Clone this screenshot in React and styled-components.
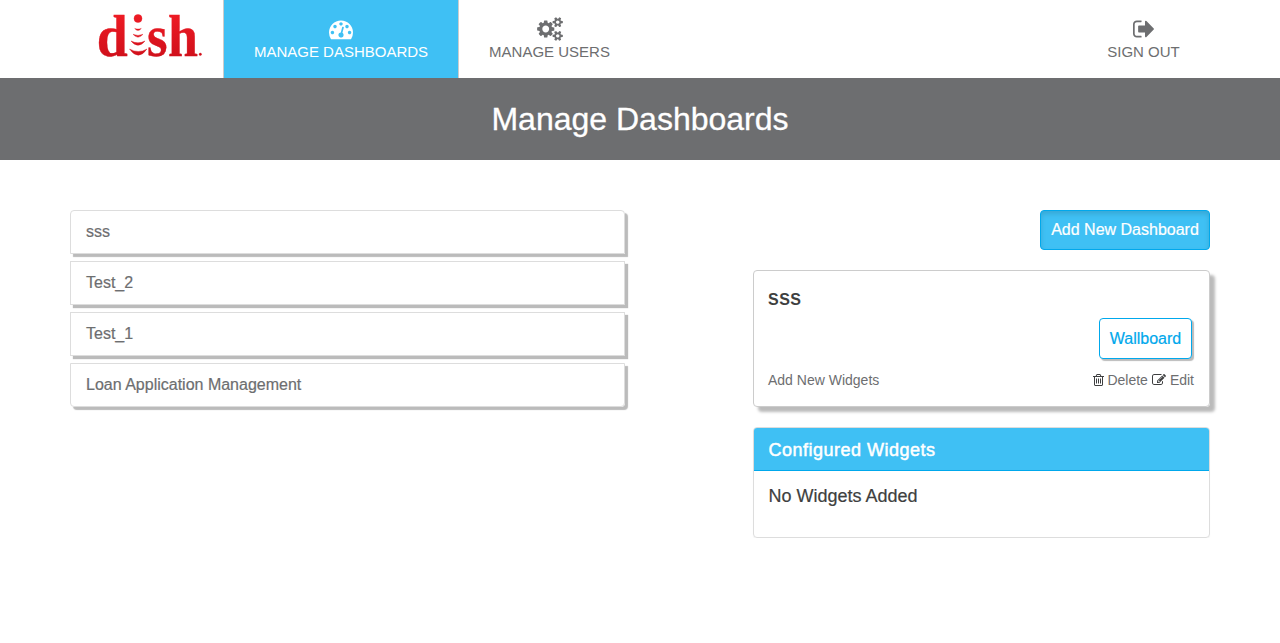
import React from "react";
import styled, { createGlobalStyle, css } from "styled-components";

const GlobalStyle = createGlobalStyle`
  *, *::before, *::after { box-sizing: border-box; }
  body {
    margin: 0;
    background: #fff;
    color: #3e3f40;
    font-family: "Liberation Sans", Arial, Helvetica, sans-serif;
    font-size: 14px;
    line-height: 20px;
  }
`;

const icons = {
  dashboard:
    "M384 1152q0-53-37.5-90.5t-90.5-37.5-90.5 37.5-37.5 90.5 37.5 90.5 90.5 37.5 90.5-37.5 37.5-90.5zm192-448q0-53-37.5-90.5t-90.5-37.5-90.5 37.5-37.5 90.5 37.5 90.5 90.5 37.5 90.5-37.5 37.5-90.5zm428 481l101-382q6-26-7.5-48.5t-38.5-29.5-48 6.5-30 39.5l-101 382q-60 5-107 43.5t-63 98.5q-20 77 20 146t117 89 146-20 89-117q16-60-6-117t-72-91zm660-33q0-53-37.5-90.5t-90.5-37.5-90.5 37.5-37.5 90.5 37.5 90.5 90.5 37.5 90.5-37.5 37.5-90.5zm-640-640q0-53-37.5-90.5t-90.5-37.5-90.5 37.5-37.5 90.5 37.5 90.5 90.5 37.5 90.5-37.5 37.5-90.5zm448 192q0-53-37.5-90.5t-90.5-37.5-90.5 37.5-37.5 90.5 37.5 90.5 90.5 37.5 90.5-37.5 37.5-90.5zm320 448q0 261-141 483-19 29-54 29h-1402q-35 0-54-29-141-221-141-483 0-182 71-348t191-286 286-191 348-71 348 71 286 191 191 286 71 348z",
  cogs:
    "M832 896q0-106-75-181t-181-75-181 75-75 181 75 181 181 75 181-75 75-181zm768 512q0-52-38-90t-90-38-90 38-38 90q0 53 37.5 90.5t90.5 37.5 90.5-37.5 37.5-90.5zm0-1024q0-52-38-90t-90-38-90 38-38 90q0 53 37.5 90.5t90.5 37.5 90.5-37.5 37.5-90.5zm-384 421v185q0 10-7 19.5t-16 10.5l-155 24q-11 35-32 76 34 48 90 115 7 11 7 20 0 12-7 19-23 30-82.5 89.5t-78.5 59.5q-11 0-21-7l-115-90q-37 19-77 31-11 108-23 155-7 24-30 24h-186q-11 0-20-7.5t-10-17.5l-23-153q-34-10-75-31l-118 89q-7 7-20 7-11 0-21-8-144-133-144-160 0-9 7-19 10-14 41-53t47-61q-23-44-35-82l-152-24q-10-1-17-9.5t-7-19.5v-185q0-10 7-19.5t16-10.5l155-24q11-35 32-76-34-48-90-115-7-11-7-20 0-12 7-20 22-30 82-89t79-59q11 0 21 7l115 90q34-18 77-32 11-108 23-154 7-24 30-24h186q11 0 20 7.5t10 17.5l23 153q34 10 75 31l118-89q8-7 20-7 11 0 21 8 144 133 144 160 0 8-7 19-12 16-42 54t-45 60q23 48 34 82l152 23q10 2 17 10.5t7 19.5zm640 533v140q0 16-149 31-12 27-30 52 51 113 51 138 0 4-4 7-122 71-124 71-8 0-46-47t-52-68q-20 2-30 2t-30-2q-14 21-52 68t-46 47q-2 0-124-71-4-3-4-7 0-25 51-138-18-25-30-52-149-15-149-31v-140q0-16 149-31 13-29 30-52-51-113-51-138 0-4 4-7 4-2 35-20t59-34 30-16q8 0 46 46.5t52 67.5q20-2 30-2t30 2q51-71 92-112l6-2q4 0 124 70 4 3 4 7 0 25-51 138 17 23 30 52 149 15 149 31zm0-1024v140q0 16-149 31-12 27-30 52 51 113 51 138 0 4-4 7-122 71-124 71-8 0-46-47t-52-68q-20 2-30 2t-30-2q-14 21-52 68t-46 47q-2 0-124-71-4-3-4-7 0-25 51-138-18-25-30-52-149-15-149-31v-140q0-16 149-31 13-29 30-52-51-113-51-138 0-4 4-7 4-2 35-20t59-34 30-16q8 0 46 46.5t52 67.5q20-2 30-2t30 2q51-71 92-112l6-2q4 0 124 70 4 3 4 7 0 25-51 138 17 23 30 52 149 15 149 31z",
  signOut:
    "M704 1440q0 4 1 20t.5 26.5-3 23.5-10 19.5-20.5 6.5h-320q-119 0-203.5-84.5t-84.5-203.5v-704q0-119 84.5-203.5t203.5-84.5h320q13 0 22.5 9.5t9.5 22.5q0 4 1 20t.5 26.5-3 23.5-10 19.5-20.5 6.5h-320q-66 0-113 47t-47 113v704q0 66 47 113t113 47h312l11.5 1 11.5 3 8 5.5 7 9 2 13.5zm928-544q0 26-19 45l-544 544q-19 19-45 19t-45-19-19-45v-288h-448q-26 0-45-19t-19-45v-384q0-26 19-45t45-19h448v-288q0-26 19-45t45-19 45 19l544 544q19 19 19 45z",
  trash:
    "M704 736v576q0 14-9 23t-23 9h-64q-14 0-23-9t-9-23v-576q0-14 9-23t23-9h64q14 0 23 9t9 23zm256 0v576q0 14-9 23t-23 9h-64q-14 0-23-9t-9-23v-576q0-14 9-23t23-9h64q14 0 23 9t9 23zm256 0v576q0 14-9 23t-23 9h-64q-14 0-23-9t-9-23v-576q0-14 9-23t23-9h64q14 0 23 9t9 23zm128 724v-948h-896v948q0 22 7 40.5t14.5 27 10.5 8.5h832q3 0 10.5-8.5t14.5-27 7-40.5zm-672-1076h448l-48-117q-7-9-17-11h-317q-10 2-17 11zm928 32v64q0 14-9 23t-23 9h-96v948q0 83-47 143.5t-113 60.5h-832q-66 0-113-58.5t-47-141.5v-952h-96q-14 0-23-9t-9-23v-64q0-14 9-23t23-9h309l70-167q15-37 54-63t79-26h320q40 0 79 26t54 63l70 167h309q14 0 23 9t9 23z",
  edit:
    "M888 1184l116-116-152-152-116 116v56h96v96h56zm440-720q-16-16-33 1l-350 350q-17 17-1 33t33-1l350-350q17-17 1-33zm80 594v190q0 119-84.5 203.5t-203.5 84.5h-832q-119 0-203.5-84.5t-84.5-203.5v-832q0-119 84.5-203.5t203.5-84.5h832q63 0 117 25 15 7 18 23 3 17-9 29l-49 49q-14 14-32 8-23-6-45-6h-832q-66 0-113 47t-47 113v832q0 66 47 113t113 47h832q66 0 113-47t47-113v-126q0-13 9-22l64-64q15-15 35-7t20 29zm-96-738l288 288-672 672h-288v-288zm444 132l-92 92-288-288 92-92q28-28 68-28t68 28l152 152q28 28 28 68t-28 68z",
};

const IconSvg = styled.svg`
  display: block;
  flex: none;
  overflow: visible;
  width: ${(p) => p.$size}px;
  height: ${(p) => p.$size}px;
  fill: currentColor;
`;

const Icon = ({ name, size, viewBox = "0 0 1792 1792" }) => (
  <IconSvg $size={size} viewBox={viewBox} aria-hidden="true">
    <path d={icons[name]} />
  </IconSvg>
);

const Header = styled.header`
  display: flex;
  height: 78px;
  padding: 0 70px;
`;

const Brand = styled.a`
  width: 153px;
  padding-left: 26px;
`;

const LogoSvg = styled.svg`
  display: block;
  width: 108px;
  height: 76px;
  font-family: "Liberation Serif", "Times New Roman", serif;
  font-weight: 700;
`;

const NavItem = styled.a`
  display: flex;
  flex-direction: column;
  align-items: center;
  width: ${(p) => p.$width}px;
  padding-top: 16.5px;
  color: #6d6e70;
  font-size: 15px;
  line-height: 22px;
  white-space: nowrap;
  ${(p) =>
    p.$active &&
    css`
      background: #3fc0f4;
      color: #fff;
      border: solid #ccc;
      border-width: 0 1px;
    `}
  ${(p) => p.$end && css`margin-left: auto;`}
`;

const TitleBar = styled.div`
  height: 82px;
  background: #6d6e70;
  color: #fff;
  text-align: center;
`;

const Title = styled.h1`
  margin: 0;
  font-size: 32px;
  line-height: 82px;
  font-weight: 400;
  -webkit-text-stroke: 0.3px currentColor;
`;

const Content = styled.main`
  display: flex;
  justify-content: space-between;
  align-items: flex-start;
  padding: 50px 70px 0;
`;

const List = styled.ul`
  display: flex;
  flex-direction: column;
  gap: 7px;
  width: 555px;
  margin: 0;
  padding: 0;
  list-style: none;
`;

const ListItem = styled.li`
  height: 44px;
  padding: 0 15px;
  border: 1px solid #ddd;
  box-shadow: 3px 3px 1px #bbb;
  color: #6d6e70;
  font-size: 16px;
  line-height: 42px;
  -webkit-text-stroke: 0.2px currentColor;
  &:first-child { border-radius: 4px 4px 0 0; }
  &:last-child { border-radius: 0 0 4px 4px; }
`;

const Side = styled.section`
  display: flex;
  flex-direction: column;
  width: 457px;
`;

const Button = styled.button`
  align-self: flex-end;
  padding: 0;
  border: 1px solid #00a8ec;
  border-radius: 4px;
  font-family: inherit;
  font-size: 16px;
  -webkit-text-stroke: 0.2px currentColor;
  ${(p) =>
    p.$primary
      ? css`
          width: 170px;
          height: 40px;
          background: #3fc0f4;
          color: #fff;
          box-shadow: inset 0 3px 5px rgba(0, 0, 0, 0.125);
        `
      : css`
          width: 93px;
          height: 41px;
          margin: 7px 2px 0 0;
          background: #fff;
          color: #00a8ec;
          box-shadow: 2px 2px 1px #bbb;
        `}
`;

const Card = styled.article`
  display: flex;
  flex-direction: column;
  height: 137px;
  margin-top: 20px;
  padding: 18px 15px 0 14px;
  border: 1px solid #ccc;
  border-radius: 4px;
  box-shadow: 5px 5px 3px #bbb;
`;

const CardTitle = styled.h2`
  margin: 0;
  font-size: 16px;
  line-height: 22px;
  letter-spacing: 0.5px;
  text-transform: uppercase;
`;

const CardFooter = styled.footer`
  display: flex;
  justify-content: space-between;
  margin-top: 11px;
  color: #6d6e70;
`;

const Actions = styled.div`
  display: flex;
  align-items: center;
  gap: 4px;
`;

const Action = styled.a`
  display: flex;
  align-items: center;
  gap: ${(p) => p.$gap}px;
  ${IconSvg} { color: #3e3f40; }
`;

const Panel = styled.article`
  height: 111px;
  margin-top: 20px;
  border: 1px solid #ddd;
  border-radius: 4px;
  box-shadow: 0 1px 1px rgba(0, 0, 0, 0.05);
  overflow: hidden;
`;

const PanelHeading = styled.h3`
  height: 43px;
  margin: 0;
  padding: 0 14.5px;
  background: #3fc0f4;
  border-bottom: 1px solid #00a8ec;
  color: #fff;
  font-size: 18px;
  font-weight: 400;
  line-height: 45px;
  letter-spacing: 0.5px;
  -webkit-text-stroke: 0.5px #fff;
`;

const PanelBody = styled.p`
  margin: 0;
  padding: 0 14.5px;
  font-size: 18px;
  line-height: 50px;
  -webkit-text-stroke: 0.2px currentColor;
`;

const Logo = () => (
  <LogoSvg viewBox="96 0 108 76" role="img" aria-label="dish">
    <defs>
      <linearGradient id="brandRed" gradientUnits="userSpaceOnUse" x1="0" y1="14" x2="0" y2="57">
        <stop offset="0" stopColor="#ee1b24" />
        <stop offset="1" stopColor="#d0101b" />
      </linearGradient>
    </defs>
    <g fill="url(#brandRed)" stroke="url(#brandRed)" strokeWidth="0.4">
      <text x="96.8" y="55.6" fontSize="60" textLength="31" lengthAdjust="spacingAndGlyphs">d</text>
      <text x="147" y="55.6" fontSize="60" textLength="20.5" lengthAdjust="spacingAndGlyphs">s</text>
      <text x="168" y="55.6" fontSize="60" textLength="30" lengthAdjust="spacingAndGlyphs">h</text>
      <circle cx="138" cy="18.5" r="4" />
      <path d="M134.7 28.5q3.3 1.2 6.6 0q-3.3 4-6.6 0z" />
      <path d="M133 34.3q5 2.3 10 0q-5 5.8-10 0z" />
      <path d="M131 41q7 3.6 14 0q-7 8.6-14 0z" />
      <path d="M129.5 49q8.8 5 17.5 0q-8.7 12.5-17.5 0z" />
      <circle cx="200.3" cy="54.3" r="1.2" />
    </g>
  </LogoSvg>
);

const dashboards = ["sss", "Test_2", "Test_1", "Loan Application Management"];

export default function App() {
  return (
    <>
      <GlobalStyle />
      <Header>
        <Brand><Logo /></Brand>
        <NavItem $active $width={236}>
          <Icon name="dashboard" size={24} />
          <span>MANAGE DASHBOARDS</span>
        </NavItem>
        <NavItem $width={181}>
          <Icon name="cogs" size={24} />
          <span>MANAGE USERS</span>
        </NavItem>
        <NavItem $end $width={133}>
          <Icon name="signOut" size={24} viewBox="-10 0 1792 1792" />
          <span>SIGN OUT</span>
        </NavItem>
      </Header>
      <TitleBar><Title>Manage Dashboards</Title></TitleBar>
      <Content>
        <List>
          {dashboards.map((name) => <ListItem key={name}>{name}</ListItem>)}
        </List>
        <Side>
          <Button $primary>Add New Dashboard</Button>
          <Card>
            <CardTitle>sss</CardTitle>
            <Button>Wallboard</Button>
            <CardFooter>
              <a>Add New Widgets</a>
              <Actions>
                <Action $gap={2}><Icon name="trash" size={14} viewBox="-64 0 1792 1792" />Delete</Action>
                <Action $gap={4}><Icon name="edit" size={14} />Edit</Action>
              </Actions>
            </CardFooter>
          </Card>
          <Panel>
            <PanelHeading>Configured Widgets</PanelHeading>
            <PanelBody>No Widgets Added</PanelBody>
          </Panel>
        </Side>
      </Content>
    </>
  );
}
